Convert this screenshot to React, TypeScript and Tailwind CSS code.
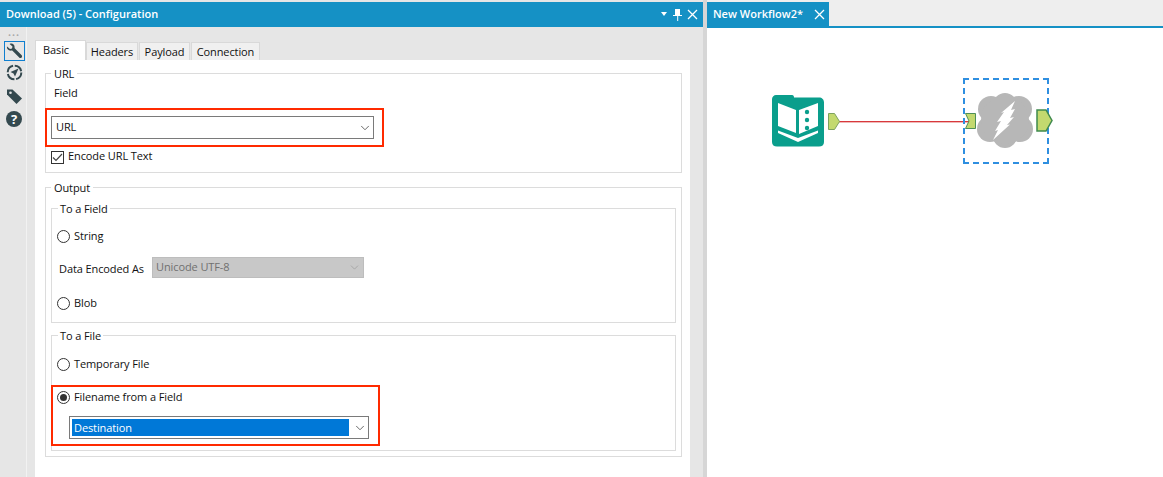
import React from 'react';
import { ChevronDown } from 'lucide-react';

const Radio: React.FC<{ label: string; checked?: boolean }> = ({ label, checked }) => (
  <div className="flex items-center h-[16px]">
    <span className="w-[13px] h-[13px] rounded-full border border-[#333] bg-white flex items-center justify-center">
      {checked && <span className="w-[7px] h-[7px] rounded-full bg-[#333]" />}
    </span>
    <span className="ml-[4px] leading-[16px]">{label}</span>
  </div>
);

const Tab: React.FC<{ label: string; width: string }> = ({ label, width }) => (
  <div className={`${width} h-[18px] mr-[1px] bg-[#f0f0f0] border border-b-0 border-[#d9d9d9] flex items-center justify-center leading-[16px]`}>
    {label}
  </div>
);

const App: React.FC = () => {
  return (
    <div className="flex w-[1163px] h-[477px] overflow-hidden bg-white text-[11px] tracking-[-0.1px] text-[#111] font-['Open_Sans','Noto_Sans',sans-serif]">
      {/* Configuration panel */}
      <div className="w-[703px] flex flex-col pt-[2px] bg-[#e6e6e6]">
        <div className="h-[25px] shrink-0 bg-[#1591c5] text-white flex items-center pl-[6px] pr-[5px]">
          <span className="text-[11px] font-semibold tracking-normal">Download (5) - Configuration</span>
          <div className="ml-auto flex items-center gap-[5px]">
            <svg width="8" height="5" viewBox="0 0 8 5"><path d="M1 0h6L4 4z" fill="#fff" /></svg>
            <svg width="9" height="13" viewBox="0 0 9 13"><path d="M2 1h5v6h2v1H5.200v5h-1V8H0V7h2z" fill="#fff" /></svg>
            <svg width="11" height="11" viewBox="0 0 11 11"><path d="M1 1l9 9M10 1l-9 9" stroke="#fff" strokeWidth="1.300" /></svg>
          </div>
        </div>

        <div className="flex-1 flex min-h-0">
          {/* Side icons */}
          <div className="w-[27px] shrink-0 border-r border-[#f2f2f2] flex flex-col items-center pl-[2px]">
            <div className="mt-[5px] text-[#aaa] text-[8px] leading-[6px] tracking-[1px]">•••</div>
            <div className="mt-[3px] w-[21px] h-[20px] border border-[#0f7fd0] flex items-center justify-center">
              <svg width="17" height="17" viewBox="0 0 17 17">
                <path d="M1 3.500L4 6l2-.5.5-2L3.600 1C6 -.2 8.600 1.200 8.600 4c0 .6-.1 1 .1 1.300l7 7c1 1.200-.3 3.500-2 2.600l-7.200-7.200c-.4-.3-.8-.2-1.300-.1C2.500 8 .4 6 1 3.500z" fill="#34494f" />
              </svg>
            </div>
            <div className="mt-[3px] w-[17px] h-[17px]">
              <svg width="17" height="17" viewBox="0 0 17 17" fill="none">
                <circle cx="8.500" cy="8.500" r="6.800" stroke="#34494f" strokeWidth="2" strokeDasharray="9 1.700" />
                <path d="M12.500 4.500L4.500 8l3 1.500 1.500 3z" fill="#34494f" />
              </svg>
            </div>
            <div className="mt-[7px] w-[17px] h-[17px]">
              <svg width="17" height="17" viewBox="0 0 17 17">
                <path d="M1 1.500h5.500L16 10.500 10.500 16 1 6.500z" fill="#34494f" />
                <circle cx="4.500" cy="4.800" r="1.300" fill="#e6e6e6" />
              </svg>
            </div>
            <div className="mt-[6px] w-[16px] h-[16px] rounded-full bg-[#34494f] text-white font-bold text-[13px] leading-[16px] text-center">?</div>
          </div>

          <div className="flex-1 min-w-0 pl-[8px] pr-[13px] pt-[13px] flex flex-col">
            {/* Tabs */}
            <div className="flex items-end h-[20px] shrink-0">
              <div className="w-[51px] h-[20px] bg-white pl-[7px] leading-[17px] border border-b-0 border-[#d9d9d9]">Basic</div>
              <Tab label="Headers" width="w-[52px]" />
              <Tab label="Payload" width="w-[51px]" />
              <Tab label="Connection" width="w-[69px]" />
            </div>

            <div className="flex-1 bg-white pl-[10px] pr-[8px] pt-[6px]">
              {/* URL */}
              <fieldset className="h-[107px] border border-[#dcdcdc] pl-[5px]">
                <legend className="px-[3px] leading-[15px]">URL</legend>
                <div className="ml-[3px] leading-[15px] mt-[4px]">Field</div>
                <div className="mt-[8px] -ml-[6px] w-[339px] h-[39px] border-2 border-[#ff2a00] pl-[4px] pt-[6px]">
                  <div className="w-[323px] h-[23px] border border-[#7a7a7a] flex items-center pl-[4px] pr-[1px]">
                    <span>URL</span>
                    <ChevronDown className="ml-auto w-[14px] h-[14px] text-[#555]" strokeWidth={1.5} />
                  </div>
                </div>
                <div className="mt-[2px] flex items-center">
                  <span className="w-[13px] h-[13px] border border-[#333] flex items-center justify-center">
                    <svg width="11" height="9" viewBox="0 0 11 9" fill="none"><path d="M1 4.500L4 7.500L10 1" stroke="#444" strokeWidth="1.200" /></svg>
                  </span>
                  <span className="ml-[4px] leading-[14px] pb-[2px]">Encode URL Text</span>
                </div>
              </fieldset>

              {/* Output */}
              <fieldset className="mt-[7px] h-[277px] border border-[#dcdcdc] px-[5px]">
                <legend className="px-[3px] leading-[15px]">Output</legend>

                <fieldset className="mt-[6px] h-[122px] border border-[#dcdcdc] pl-[5px]">
                  <legend className="ml-[1px] px-[2px] leading-[15px]">To a Field</legend>
                  <div className="mt-[12px]"><Radio label="String" /></div>
                  <div className="mt-[13px] flex items-center h-[21px]">
                    <span className="ml-[2px] w-[93px] pt-[3px]">Data Encoded As</span>
                    <div className="w-[212px] h-[21px] bg-[#c8c8c8] border border-[#bdbdbd] flex items-center pl-[3px] pr-[2px] text-[#707070]">
                      <span>Unicode UTF-8</span>
                      <ChevronDown className="ml-auto w-[13px] h-[13px] text-[#a0a0a0]" strokeWidth={1.5} />
                    </div>
                  </div>
                  <div className="mt-[17px]"><Radio label="Blob" /></div>
                </fieldset>

                <fieldset className="mt-[5px] h-[123px] border border-[#dcdcdc]">
                  <legend className="ml-[6px] px-[2px] leading-[15px]">To a File</legend>
                  <div className="mt-[13px] ml-[5px]"><Radio label="Temporary File" /></div>
                  <div className="mt-[13px] -ml-[1px] w-[329px] h-[61px] border-2 border-[#ff2a00] pl-[4px] pt-[2px]">
                    <Radio label="Filename from a Field" checked />
                    <div className="mt-[11px] ml-[12px] w-[300px] h-[23px] border border-[#7a7a7a] flex items-center pl-[2px] pr-[1px]">
                      <span className="w-[277px] h-[17px] bg-[#0078d7] text-white leading-[17px] pl-[2px]">Destination</span>
                      <ChevronDown className="ml-auto w-[14px] h-[14px] text-[#555]" strokeWidth={1.5} />
                    </div>
                  </div>
                </fieldset>
              </fieldset>
            </div>
          </div>
        </div>
      </div>

      {/* Splitter */}
      <div className="w-[4px] shrink-0 bg-[#d6d6d6]" />

      {/* Workflow canvas */}
      <div className="flex-1 min-w-0 flex flex-col">
        <div className="h-[28px] shrink-0 pt-[2px] bg-[#eeeeee] border-b-2 border-[#1591c5] flex">
          <div className="w-[122px] h-[24px] bg-[#1591c5] text-white flex items-center pl-[6px] pr-[3px]">
            <span className="text-[11px] font-semibold tracking-normal">New Workflow2*</span>
            <svg className="ml-auto mr-[1px]" width="11" height="11" viewBox="0 0 11 11"><path d="M1 1l9 9M10 1l-9 9" stroke="#fff" strokeWidth="1.300" /></svg>
          </div>
        </div>

        <div className="relative flex-1">
          {/* Connection */}
          <div className="absolute left-[132px] top-[93px] w-[136px] h-[2px] bg-[#d8383c] border-b border-[#f0b8b8]" />

          {/* Text input node */}
          <svg className="absolute left-[65px] top-[67px]" width="52" height="52" viewBox="0 0 52 52">
            <path d="M4 0h16c1.500 0 2 1 2 2.500H47c3 0 5 2 5 5V47c0 3-2 4.500-5 4.500H5c-3 0-5-1.500-5-4.500V4c0-2 2-4 4-4z" fill="#0a9e8c" />
            <path d="M6 8l18 7v23L6 31zM27 15l19-7v23l-19 8z" fill="#fff" />
            <circle cx="35" cy="17" r="2.200" fill="#0a9e8c" />
            <circle cx="35" cy="25" r="2.200" fill="#0a9e8c" />
            <circle cx="35" cy="33" r="2.200" fill="#0a9e8c" />
            <path d="M6 35.500L26 43l20-7.500V38L26 47 6 38z" fill="#fff" />
          </svg>
          <svg className="absolute left-[121px] top-[85px]" width="12" height="17" viewBox="0 0 12 17">
            <path d="M.5.5h6l5 8-5 8h-6z" fill="#c3d96f" stroke="#7ea25f" />
          </svg>

          {/* Download node */}
          <div className="absolute left-[256px] top-[50px] w-[86px] h-[86px] border-2 border-dashed border-[#2f8fe0]" />
          <svg className="absolute left-[258px] top-[85px]" width="11" height="16" viewBox="0 0 11 16">
            <path d="M.5.5h10v15H.5l3.500-7.500z" fill="#c3d96f" stroke="#4f8f57" />
          </svg>
          <svg className="absolute left-[270px] top-[65px]" width="56" height="55" viewBox="0 0 56 55">
            <g fill="#b7b7b7">
              <circle cx="28" cy="12" r="12" />
              <circle cx="14" cy="16" r="13" />
              <circle cx="42" cy="16" r="13" />
              <circle cx="13" cy="36" r="13" />
              <circle cx="43" cy="36" r="13" />
              <circle cx="28" cy="43" r="12" />
              <circle cx="28" cy="27" r="24" />
            </g>
            <path d="M38 8l-4 9 4-1-5 9 4-1-7 8 3-.5L16 47l5-10-3 1 6-10-4 1 7-10-3 1z" fill="#fff" />
          </svg>
          <svg className="absolute left-[329px] top-[81px]" width="17" height="23" viewBox="0 0 17 23">
            <path d="M1 1h9l6 10.500L10 22H1z" fill="#c3d96f" stroke="#3f8a4e" strokeWidth="1.500" />
          </svg>
        </div>
      </div>
    </div>
  );
};

export default App;
